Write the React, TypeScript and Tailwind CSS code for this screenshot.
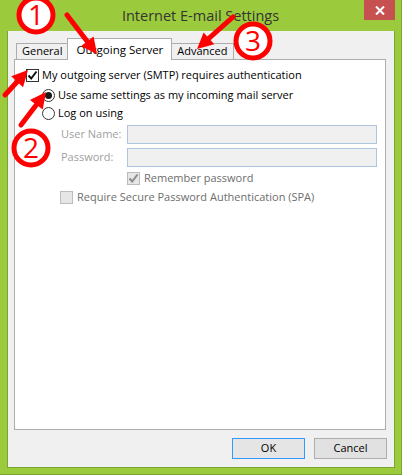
import type { ReactNode } from 'react'

const font = { fontFamily: '"Open Sans", "Noto Sans", sans-serif' }

function Arrow({ x1, y1, x2, y2 }: { x1: number; y1: number; x2: number; y2: number }) {
  const dx = x2 - x1
  const dy = y2 - y1
  const len = Math.hypot(dx, dy)
  const ux = dx / len
  const uy = dy / len
  const head = 16
  const half = 8
  const bx = x2 - ux * head
  const by = y2 - uy * head
  const px = -uy
  const py = ux
  return (
    <g>
      <line x1={x1} y1={y1} x2={bx + ux * 2} y2={by + uy * 2} stroke="#ff0000" strokeWidth={5} strokeLinecap="round" />
      <polygon
        points={`${x2},${y2} ${bx + px * half},${by + py * half} ${bx - px * half},${by - py * half}`}
        fill="#ff0000"
      />
    </g>
  )
}

function Badge({ cx, cy, n }: { cx: number; cy: number; n: string }) {
  return (
    <g>
      <circle cx={cx} cy={cy} r={17} fill="white" stroke="#ff0000" strokeWidth={5} />
      <text x={cx} y={cy + 10} textAnchor="middle" fontSize={28} fill="#ff0000" style={font}>
        {n}
      </text>
    </g>
  )
}

function Check({ disabled, checked }: { disabled?: boolean; checked?: boolean }) {
  return (
    <span
      className={
        'w-[13px] h-[13px] border flex items-center justify-center shrink-0 ' +
        (disabled ? 'border-[#bcbcbc] bg-[#e6e6e6]' : 'border-[#333] bg-white')
      }
    >
      {checked && (
        <svg width="11" height="11" viewBox="0 0 11 11">
          <path d="M1.5 5.5 L4.2 8.5 L9.5 1.5" fill="none" stroke={disabled ? '#8a8a8a' : '#111'} strokeWidth={2} />
        </svg>
      )}
    </span>
  )
}

function Radio({ on }: { on?: boolean }) {
  return (
    <span className="w-[13px] h-[13px] rounded-full border border-[#333] bg-white flex items-center justify-center shrink-0">
      {on && <span className="w-[7px] h-[7px] rounded-full bg-[#1a1a1a]" />}
    </span>
  )
}

function Tab({ children, active }: { children: ReactNode; active?: boolean }) {
  return active ? (
    <div className="h-[22px] px-[8px] bg-white border border-b-0 border-[#adadad] relative z-10 flex items-center text-[11.5px] text-black -mx-px">
      {children}
    </div>
  ) : (
    <div className="h-[17px] px-[5px] bg-[#f0f0f0] border border-[#adadad] flex items-center text-[11px] text-black">
      {children}
    </div>
  )
}

export default function App() {
  return (
    <div className="relative w-[402px] h-[475px] bg-[#9bcb3c] border-r border-b border-[#79a530] overflow-hidden" style={font}>
      <div className="h-[31px] flex relative">
        <div className="flex-1 text-center text-[14.5px] text-[#333] pt-[5px]">Internet E-mail Settings</div>
        <div className="absolute right-[6px] top-0 w-[31px] h-[20px] bg-[#c75050] flex items-center justify-center">
          <svg width="10" height="9" viewBox="0 0 10 9">
            <path d="M1 0.5 L9 8.5 M9 0.5 L1 8.5" stroke="white" strokeWidth={2} />
          </svg>
        </div>
      </div>

      <div className="ml-[7px] w-[388px] h-[437px] bg-[#f0f0f0] border border-t-0 border-[#79a530] pl-[6px] pt-[7px]">
        <div className="flex items-end h-[22px] pl-[2px]">
          <Tab>General</Tab>
          <Tab active>Outgoing Server</Tab>
          <Tab>Advanced</Tab>
        </div>
        <div className="-mt-px w-[372px] h-[371px] bg-white border border-[#adadad] pt-[6px] text-[11px] text-black">
          <div className="h-[18px] flex items-center gap-[3px] pl-[11px]">
            <Check checked />
            <span>My outgoing server (SMTP) requires authentication</span>
          </div>
          <div className="h-[18px] mt-[2px] flex items-center gap-[3px] pl-[27px]">
            <Radio on />
            <span>Use same settings as my incoming mail server</span>
          </div>
          <div className="h-[18px] flex items-center gap-[3px] pl-[27px]">
            <Radio />
            <span>Log on using</span>
          </div>
          <div className="h-[19px] mt-[3px] flex items-center pl-[46px] text-[#a0a0a0]">
            <span className="w-[66px]">User Name:</span>
            <div className="w-[250px] h-[19px] border border-[#adc6e0] bg-[#f0f0f0]" />
          </div>
          <div className="h-[19px] mt-[4px] flex items-center pl-[46px] text-[#a0a0a0]">
            <span className="w-[66px]">Password:</span>
            <div className="w-[250px] h-[19px] border border-[#adc6e0] bg-[#f0f0f0]" />
          </div>
          <div className="h-[18px] mt-[2px] flex items-center gap-[4px] pl-[112px] text-[#6d6d6d]">
            <Check disabled checked />
            <span>Remember password</span>
          </div>
          <div className="h-[18px] mt-[1px] flex items-center gap-[4px] pl-[45px] text-[#6d6d6d]">
            <Check disabled />
            <span>Require Secure Password Authentication (SPA)</span>
          </div>
        </div>
        <div className="flex justify-end gap-[9px] mt-[8px] pr-[7px]">
          <button className="w-[73px] h-[21px] border border-[#3399ff] bg-[#e5e5e5] text-[11px] text-black">OK</button>
          <button className="w-[73px] h-[21px] border border-[#adadad] bg-[#e1e1e1] text-[11px] text-black">Cancel</button>
        </div>
      </div>

      <svg className="absolute inset-0 z-20 pointer-events-none" width="402" height="475">
        <Arrow x1={67} y1={15} x2={97} y2={54} />
        <Arrow x1={233} y1={17} x2={197} y2={49} />
        <Arrow x1={5} y1={95} x2={28} y2={70} />
        <Arrow x1={21} y1={125} x2={46} y2={92} />
        <Badge cx={36} cy={15} n="1" />
        <Badge cx={31} cy={148} n="2" />
        <Badge cx={253} cy={41} n="3" />
      </svg>
    </div>
  )
}
